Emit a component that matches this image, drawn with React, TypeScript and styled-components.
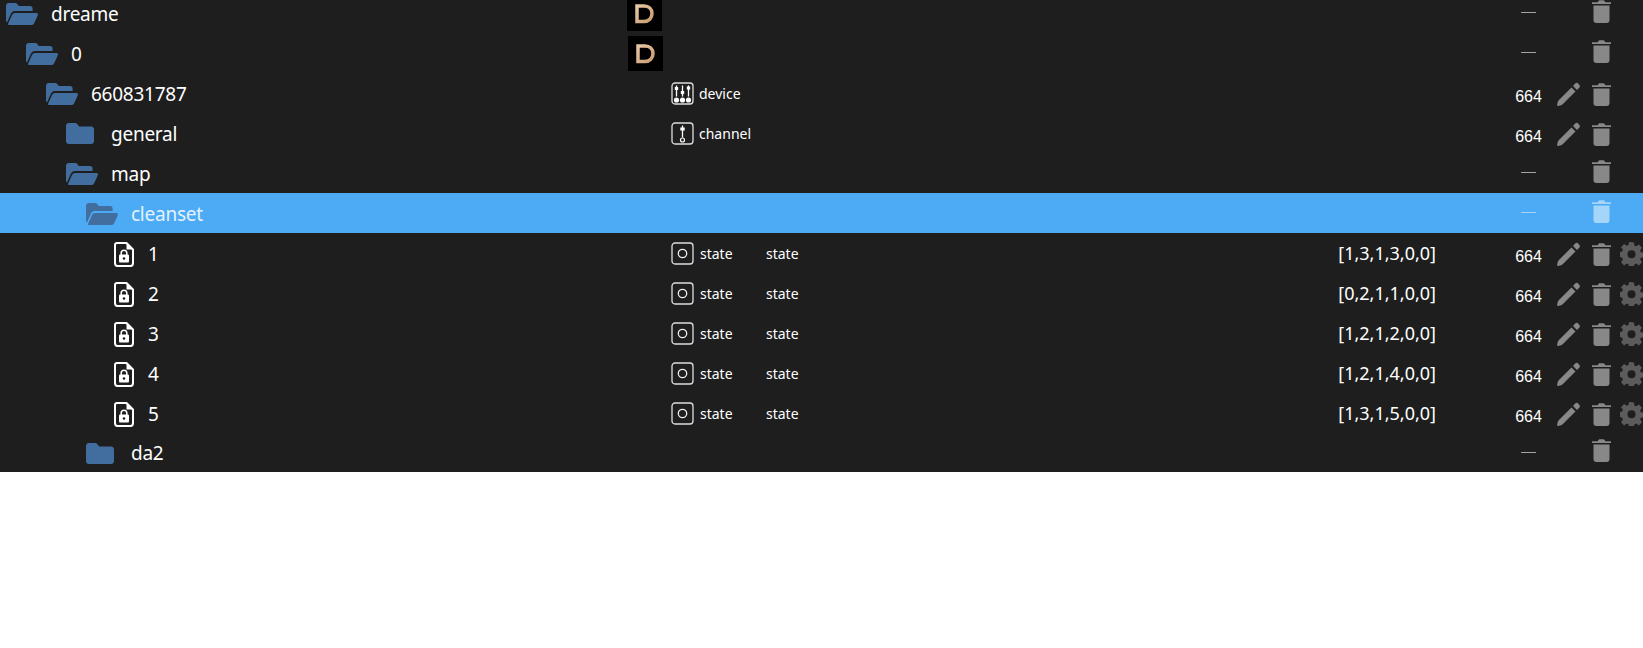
import styled, { createGlobalStyle } from "styled-components";

const GlobalStyle = createGlobalStyle`
    html, body {
        margin: 0;
        padding: 0;
        background: #fff;
        overflow: hidden;
    }
`;

const Table = styled.div`
    margin-top: -7px;
    background: #1e1e1e;
    color: #fff;
    font-family: "Noto Sans", "Open Sans", sans-serif;
`;

const Row = styled.div<{ $selected?: boolean }>`
    display: flex;
    align-items: center;
    height: 40px;
    background: ${(p) => (p.$selected ? "#4dabf5" : "transparent")};
    color: ${(p) => (p.$selected ? "#e3f2fd" : "#fff")};
    --icon: ${(p) => (p.$selected ? "#a6d5fa" : "#888")};

    &:last-child {
        height: 39px;
    }
`;

const NameCell = styled.div<{ $level: number }>`
    flex: 0 0 627px;
    box-sizing: border-box;
    display: flex;
    align-items: center;
    padding-left: ${(p) => 6 + p.$level * 20}px;
    padding-top: 1px;
    font-size: 19px;
    letter-spacing: -0.25px;
`;

const FolderSlot = styled.span`
    flex: 0 0 45px;
    display: flex;
`;

const FileSlot = styled.span`
    flex: 0 0 35px;
    margin-left: 7px;
    display: flex;
`;

const LogoSlot = styled.div<{ $nudge: number }>`
    flex: 0 0 44px;
    box-sizing: border-box;
    height: 35px;
    display: flex;
    padding-left: ${(p) => p.$nudge}px;
`;

const RoleCell = styled.div<{ $gap: number }>`
    flex: 0 0 95px;
    display: flex;
    align-items: center;
    gap: ${(p) => p.$gap}px;
    font-size: 14px;
    padding-top: 1px;
`;

const TypeCell = styled.div`
    flex: 0 0 auto;
    font-size: 14px;
    padding-top: 1px;
`;

const ValueCell = styled.div`
    flex: 1;
    text-align: right;
    font-size: 18px;
    white-space: nowrap;
`;

const ModeCell = styled.div`
    flex: 0 0 27px;
    margin-left: 79px;
    text-align: center;
    font-size: 16px;
    font-family: "Liberation Sans", sans-serif;
    padding-top: 8px;
`;

const Dash = styled.span`
    display: block;
    font-size: 15px;
    line-height: 16px;
    opacity: 0.6;
    margin-top: -12px;
`;

const Actions = styled.div<{ $raised: boolean }>`
    flex: 0 0 101px;
    box-sizing: border-box;
    display: flex;
    align-items: center;
    padding-left: 15px;
    margin-top: ${(p) => (p.$raised ? "-4px" : "2px")};
`;

const EditSlot = styled.span`
    flex: 0 0 35px;
    display: flex;
`;

const DeleteSlot = styled.span`
    flex: 0 0 28px;
    display: flex;
`;

const FolderOpen = () => (
    <svg width="32" height="22" viewBox="0 0 32 22">
        <path
            fill="#426e9f"
            d="M0 3C0 1.200 1 0 3 0h6c1 0 1.600.3 2.200 1l1.600 2H24c1.600 0 2.600 1 2.600 2.400V8H9c-2 0-3.200 1-4 2.600L1 19.500C.4 19 0 18.200 0 17Z"
        />
        <path
            fill="#426e9f"
            d="M9 10h21c1.600 0 2.300 1 1.700 2.400l-3.300 7.300C27.800 21.200 26.800 22 25 22H3c-1 0-1.200-.6-.8-1.500L6 12c.6-1.300 1.600-2 3-2Z"
        />
    </svg>
);

const FolderClosed = () => (
    <svg width="28" height="21" viewBox="0 0 28 21">
        <path
            fill="#426e9f"
            d="M0 3C0 1.200 1.200 0 3 0h6c1 0 1.600.3 2.200 1l2 2.400H25c1.800 0 3 1.200 3 3V18c0 1.800-1.200 3-3 3H3c-1.800 0-3-1.200-3-3Z"
        />
    </svg>
);

const LockedFile = () => (
    <svg width="20" height="25" viewBox="0 0 20 25" style={{ marginLeft: 1, marginTop: 1 }}>
        <path
            fill="none"
            stroke="#fff"
            strokeWidth="2"
            strokeLinejoin="round"
            d="M3 1h9.500L19 7.500V21c0 1.700-1 3-2.500 3h-13C2 24 1 22.700 1 21V3c0-1.200.8-2 2-2Z"
        />
        <path fill="#fff" d="M12.500 1v6.500H19Z" />
        <rect x="5" y="12.500" width="10" height="8" rx="1" fill="#fff" />
        <path fill="none" stroke="#fff" strokeWidth="1.500" d="M7.200 13V11a2.800 2.800 0 0 1 5.600 0v2" />
        <circle cx="10" cy="16.500" r="1.300" fill="#1e1e1e" />
    </svg>
);

const Logo = () => (
    <svg width="35" height="35" viewBox="0 0 35 35">
        <defs>
            <linearGradient id="tan" x1="0" x2="1" y1="0" y2="1">
                <stop offset="0" stopColor="#e8c7a4" />
                <stop offset="1" stopColor="#c99c72" />
            </linearGradient>
        </defs>
        <rect width="35" height="35" fill="#000" />
        <path
            fill="none"
            stroke="url(#tan)"
            strokeWidth="3.500"
            d="M10 10h7c4.800 0 8 3 8 7.500s-3.200 8-8 8h-7Z"
        />
    </svg>
);

const StateIcon = () => (
    <svg width="23" height="23" viewBox="0 0 23 23">
        <rect x="1" y="1" width="21" height="21" rx="3" fill="none" stroke="#ddd" strokeWidth="1.300" />
        <circle cx="11.500" cy="11.500" r="4.200" fill="none" stroke="#eee" strokeWidth="1.300" />
    </svg>
);

const DeviceIcon = () => (
    <svg width="23" height="23" viewBox="0 0 23 23">
        <rect x="1" y="1" width="21" height="21" rx="3" fill="none" stroke="#ddd" strokeWidth="1.300" />
        <g stroke="#fff" strokeWidth="1.300">
            <path d="M5.500 3.500v11M11.500 3.500v11M17.500 3.500v11" />
            <path strokeWidth="3" d="M3.800 6.500h3.400M9.800 10.500h3.400M15.800 6h3.400" />
        </g>
        <g fill="#fff">
            <circle cx="5.500" cy="18" r="2.600" />
            <circle cx="11.500" cy="18" r="2.600" />
            <circle cx="17.500" cy="18" r="2.600" />
        </g>
    </svg>
);

const ChannelIcon = () => (
    <svg width="23" height="23" viewBox="0 0 23 23">
        <rect x="1" y="1" width="21" height="21" rx="3" fill="none" stroke="#ddd" strokeWidth="1.300" />
        <path stroke="#fff" strokeWidth="1.300" d="M11.500 3.500v12" />
        <path stroke="#fff" strokeWidth="3" d="M9.300 7h4.400" />
        <circle cx="11.500" cy="18" r="2" fill="none" stroke="#fff" strokeWidth="1.200" />
    </svg>
);

const Pencil = () => (
    <svg width="23" height="24" viewBox="0 0 23 24" style={{ display: "block" }}>
        <path fill="var(--icon)" d="M14.500 5.500l4 4L5.700 22.300c-.5.500-1 .7-1.600.9L1 24c-.6.100-1-.3-.9-.9l.7-3.300c.1-.6.400-1.100.9-1.600Z" />
        <path fill="var(--icon)" d="M16 3.900l2.200-2.300c1-1 2.100-1 3 0l1 1.100c1 1 1 2 0 3l-2.200 2.200Z" />
    </svg>
);

const Trash = () => (
    <svg width="19" height="23" viewBox="0 0 19 23" style={{ display: "block" }}>
        <path fill="var(--icon)" d="M0 2.200h5.800C6.200 .8 7 .2 8 .2h3c1 0 1.800.6 2.200 2H19V4H0Z" />
        <path fill="var(--icon)" d="M1.500 5.500h16V20c0 1.800-1 3-2.800 3H4.300c-1.800 0-2.800-1.200-2.800-3Z" />
    </svg>
);

const Gear = () => (
    <svg width="23" height="24" viewBox="0 0 24 24" style={{ display: "block" }}>
        <path
            fill="#5c5c5c"
            fillRule="evenodd"
            d="M14.500 0l.6 3.200 1.900.8 2.700-1.900 3.200 3.400-1.900 2.700.8 1.900 3.200.6v4.600l-3.200.6-.8 1.900 1.900 2.700-3.200 3.400-2.700-1.900-1.900.8-.6 3.200H9.500l-.6-3.200-1.900-.8-2.700 1.900-3.200-3.400 1.900-2.700-.8-1.900L-1 14.700v-4.600l3.200-.6.8-1.900-1.900-2.700 3.200-3.400 2.700 1.900 1.900-.8.600-3.200ZM12 8a4.200 4.200 0 1 0 0 8.400 4.200 4.200 0 0 0 0-8.400Z"
        />
    </svg>
);

type Entry = {
    name: string;
    level: number;
    kind: "open" | "closed" | "file";
    logo?: boolean;
    role?: "device" | "channel" | "state";
    type?: string;
    value?: string;
    mode?: string;
    selected?: boolean;
};

const entries: Entry[] = [
    { name: "dreame", level: 0, kind: "open", logo: true },
    { name: "0", level: 1, kind: "open", logo: true },
    { name: "660831787", level: 2, kind: "open", role: "device", mode: "664" },
    { name: "general", level: 3, kind: "closed", role: "channel", mode: "664" },
    { name: "map", level: 3, kind: "open" },
    { name: "cleanset", level: 4, kind: "open", selected: true },
    { name: "1", level: 5, kind: "file", role: "state", type: "state", value: "[1,3,1,3,0,0]", mode: "664" },
    { name: "2", level: 5, kind: "file", role: "state", type: "state", value: "[0,2,1,1,0,0]", mode: "664" },
    { name: "3", level: 5, kind: "file", role: "state", type: "state", value: "[1,2,1,2,0,0]", mode: "664" },
    { name: "4", level: 5, kind: "file", role: "state", type: "state", value: "[1,2,1,4,0,0]", mode: "664" },
    { name: "5", level: 5, kind: "file", role: "state", type: "state", value: "[1,3,1,5,0,0]", mode: "664" },
    { name: "da2", level: 4, kind: "closed" },
];

const roleIcons = {
    device: <DeviceIcon />,
    channel: <ChannelIcon />,
    state: <StateIcon />,
};

export default function App() {
    return (
        <>
            <GlobalStyle />
            <Table>
                {entries.map((e) => (
                    <Row key={e.name} $selected={e.selected}>
                        <NameCell $level={e.level}>
                            {e.kind === "file" ? (
                                <FileSlot>
                                    <LockedFile />
                                </FileSlot>
                            ) : (
                                <FolderSlot>{e.kind === "open" ? <FolderOpen /> : <FolderClosed />}</FolderSlot>
                            )}
                            {e.name}
                        </NameCell>
                        <LogoSlot $nudge={e.level}>{e.logo && <Logo />}</LogoSlot>
                        <RoleCell $gap={e.role === "state" ? 6 : 5}>
                            {e.role && roleIcons[e.role]}
                            {e.role}
                        </RoleCell>
                        <TypeCell>{e.type}</TypeCell>
                        <ValueCell>{e.value}</ValueCell>
                        <ModeCell>{e.mode ?? <Dash>—</Dash>}</ModeCell>
                        <Actions $raised={!e.mode}>
                            <EditSlot>{e.mode && <Pencil />}</EditSlot>
                            <DeleteSlot>
                                <Trash />
                            </DeleteSlot>
                            {e.kind === "file" && <Gear />}
                        </Actions>
                    </Row>
                ))}
            </Table>
        </>
    );
}
